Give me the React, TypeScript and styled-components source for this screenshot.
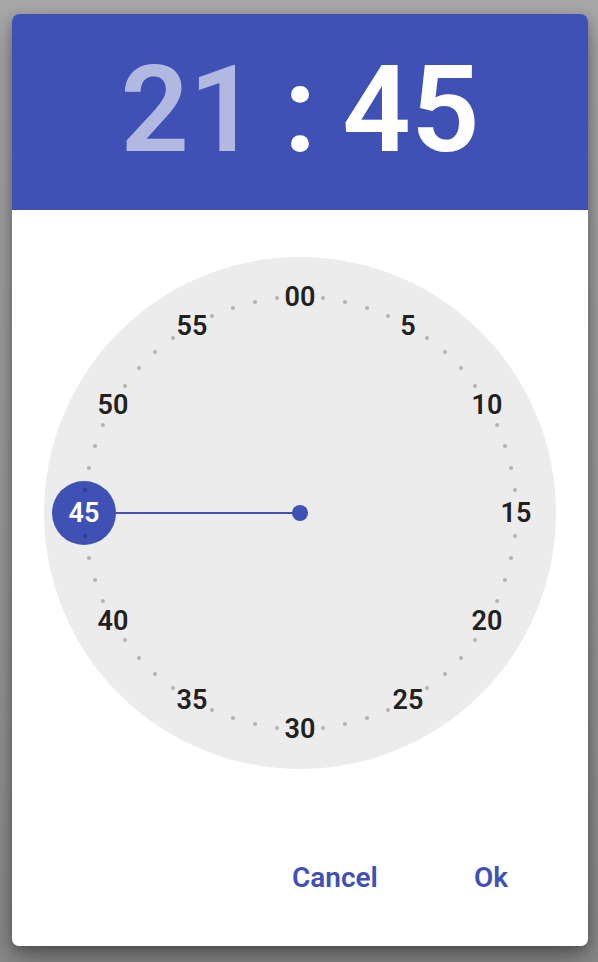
import React from "react";
import styled, { createGlobalStyle } from "styled-components";

const GlobalStyle = createGlobalStyle`
  html, body {
    margin: 0;
    padding: 0;
    background: #a3a3a3;
    font-family: Roboto, "Noto Sans", Arial, sans-serif;
  }
`;

const BLUE = "#3f51b5";
const FACE = 512;
const RADIUS = 216;

const Page = styled.div`
  min-height: 962px;
  padding: 14px 10px 16px 12px;
  box-sizing: border-box;
  background: linear-gradient(#a8a8a8 0%, #999 60%, #8a8a8a 100%);
`;

const Dialog = styled.div`
  width: 576px;
  height: 932px;
  background: #fff;
  border-radius: 7px;
  overflow: hidden;
  display: flex;
  flex-direction: column;
  box-shadow: 0 12px 28px rgba(0, 0, 0, 0.35), 0 4px 10px rgba(0, 0, 0, 0.2);
`;

const Header = styled.div`
  height: 196px;
  background: ${BLUE};
  display: flex;
  align-items: center;
  justify-content: center;
  gap: 26px;
  font-size: 120px;
  font-weight: 600;
  line-height: 1;
  padding-bottom: 4px;
  box-sizing: border-box;
`;

const TimePart = styled.span<{ $active?: boolean }>`
  color: ${(p) => (p.$active ? "#fff" : "rgba(255, 255, 255, 0.6)")};
`;

const Body = styled.div`
  flex: 1;
  display: flex;
  flex-direction: column;
  align-items: center;
  padding-top: 47px;
`;

const Face = styled.div`
  position: relative;
  width: ${FACE}px;
  height: ${FACE}px;
  border-radius: 50%;
  background: #ececec;
`;

const Hand = styled.div`
  position: absolute;
  top: 50%;
  height: 2px;
  margin-top: -1px;
  background: ${BLUE};
`;

const Pivot = styled.div`
  position: absolute;
  left: 50%;
  top: 50%;
  width: 16px;
  height: 16px;
  margin: -8px 0 0 -8px;
  border-radius: 50%;
  background: ${BLUE};
`;

const Knob = styled.div`
  position: absolute;
  width: 64px;
  height: 64px;
  margin: -32px 0 0 -32px;
  border-radius: 50%;
  background: ${BLUE};
`;

const Tick = styled.div`
  position: absolute;
  width: 4px;
  height: 4px;
  margin: -2px 0 0 -2px;
  border-radius: 50%;
  background: rgba(0, 0, 0, 0.25);
`;

const Label = styled.div<{ $selected?: boolean }>`
  position: absolute;
  transform: translate(-50%, -50%);
  font-size: 27px;
  font-weight: 600;
  line-height: 1;
  color: ${(p) => (p.$selected ? "#fff" : "#212121")};
`;

const Actions = styled.div`
  margin-top: auto;
  display: flex;
  justify-content: flex-end;
  align-items: center;
  gap: 96px;
  padding: 0 80px 52px 0;
  align-self: stretch;
`;

const TextButton = styled.button`
  border: 0;
  background: none;
  padding: 0;
  font-family: inherit;
  font-size: 28px;
  font-weight: 600;
  color: ${BLUE};
  cursor: pointer;
`;

const pos = (minute: number) => {
  const a = (minute / 60) * Math.PI * 2;
  return {
    left: FACE / 2 + Math.sin(a) * RADIUS,
    top: FACE / 2 - Math.cos(a) * RADIUS,
  };
};

export default function App() {
  const selected = 45;
  const knob = pos(selected);
  const minutes = Array.from({ length: 60 }, (_, i) => i);

  return (
    <>
      <GlobalStyle />
      <Page>
        <Dialog>
          <Header>
            <TimePart>21</TimePart>
            <TimePart $active>:</TimePart>
            <TimePart $active>45</TimePart>
          </Header>
          <Body>
            <Face>
              <Hand style={{ left: knob.left, width: FACE / 2 - knob.left }} />
              <Pivot />
              <Knob style={knob} />
              {minutes
                .filter((m) => m % 5 !== 0)
                .map((m) => (
                  <Tick key={m} style={pos(m)} />
                ))}
              {minutes
                .filter((m) => m % 5 === 0)
                .map((m) => (
                  <Label key={m} style={pos(m)} $selected={m === selected}>
                    {m === 0 ? "00" : m}
                  </Label>
                ))}
            </Face>
            <Actions>
              <TextButton>Cancel</TextButton>
              <TextButton>Ok</TextButton>
            </Actions>
          </Body>
        </Dialog>
      </Page>
    </>
  );
}
